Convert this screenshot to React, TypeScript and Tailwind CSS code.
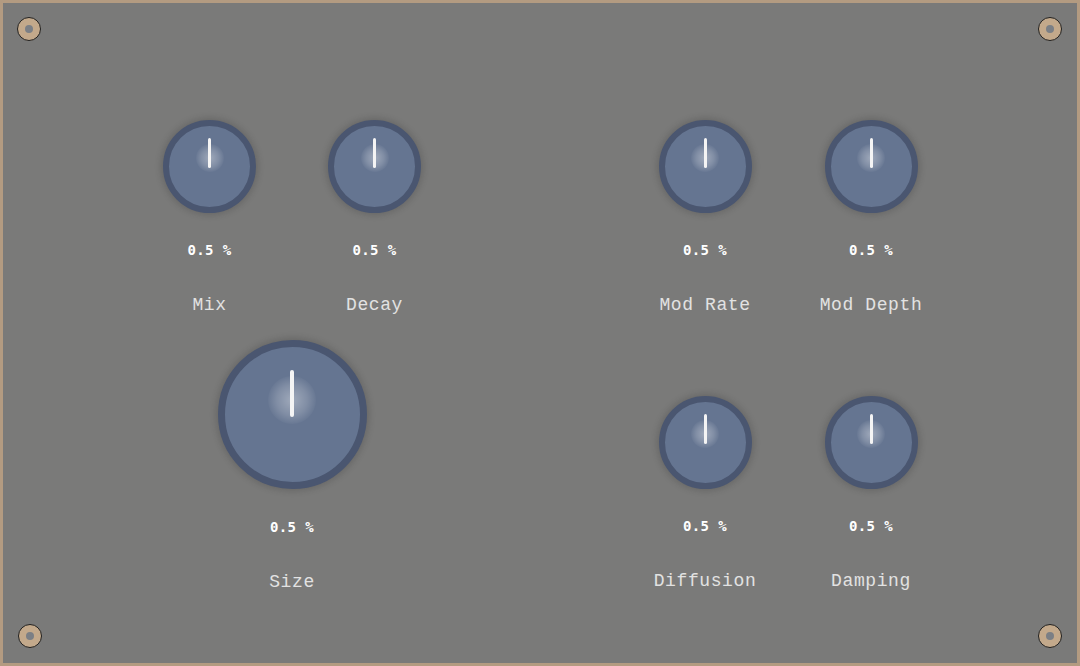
import React from "react";

type KnobProps = { size: number; ring: number; lineTop: number; lineLen: number; lineW: number; glowY: number; glowR: number };

function Knob({ size, ring, lineTop, lineLen, lineW, glowY, glowR }: KnobProps) {
  return (
    <div
      className="relative rounded-full bg-[#657591] border-[#4a5670] shadow-[0_0_6px_2px_rgba(40,40,40,0.22)]"
      style={{ width: size, height: size, borderWidth: ring }}
    >
      <div
        className="absolute rounded-full bg-[radial-gradient(circle,rgba(255,255,255,0.38)_0%,rgba(255,255,255,0.18)_45%,rgba(255,255,255,0)_75%)]"
        style={{ width: glowR * 2, height: glowR * 2, left: size / 2 - ring - glowR, top: glowY - ring - glowR }}
      />
      <div
        className="absolute rounded-full bg-[#f4f4f4]"
        style={{ width: lineW, height: lineLen, left: size / 2 - ring - lineW / 2, top: lineTop - ring }}
      />
    </div>
  );
}

function Cell({ label, big, width }: { label: string; big?: boolean; width: string }) {
  return (
    <div className={`flex flex-col items-center ${width}`}>
      {big ? (
        <Knob size={149} ring={7} lineTop={30} lineLen={47} lineW={4} glowY={60} glowR={24} />
      ) : (
        <Knob size={93} ring={6} lineTop={18} lineLen={30} lineW={3} glowY={38} glowR={14} />
      )}
      <div className={`${big ? "mt-[28px]" : "mt-[27px]"} h-[20px] leading-[20px] text-[14px] font-bold text-white font-['DejaVu_Sans_Mono',monospace] tracking-[0.4px]`}>
        0.5 %
      </div>
      <div className="mt-[35px] h-[20px] leading-[20px] text-[18px] text-[#e2e2e2] font-['Courier_New','Courier','Nimbus_Mono_PS','FreeMono','Liberation_Mono',monospace] tracking-[0.6px]">
        {label}
      </div>
    </div>
  );
}

function Screw({ pos }: { pos: string }) {
  return (
    <div className={`absolute ${pos} w-[24px] h-[24px] rounded-full bg-[#c3a98b] border-[1.5px] border-[#202020] flex items-center justify-center`}>
      <div className="w-[8px] h-[8px] rounded-full bg-[#7b7f85]" />
    </div>
  );
}

export default function App() {
  return (
    <div className="relative w-[1080px] h-[666px] bg-[#7a7a79] border-[3px] border-[#b39b81] overflow-hidden">
      <Screw pos="left-[14px] top-[14px]" />
      <Screw pos="right-[15px] top-[14px]" />
      <Screw pos="left-[15px] bottom-[15px]" />
      <Screw pos="right-[15px] bottom-[15px]" />
      <div className="flex pl-[124px] pt-[117px] gap-[165px]">
        <div className="flex flex-col">
          <div className="flex">
            <Cell label="Mix" width="w-[165px]" />
            <Cell label="Decay" width="w-[165px]" />
          </div>
          <div className="mt-[25px] flex">
            <Cell label="Size" big width="w-[330px]" />
          </div>
        </div>
        <div className="flex flex-col">
          <div className="flex">
            <Cell label="Mod Rate" width="w-[166px]" />
            <Cell label="Mod Depth" width="w-[166px]" />
          </div>
          <div className="mt-[81px] flex">
            <Cell label="Diffusion" width="w-[166px]" />
            <Cell label="Damping" width="w-[166px]" />
          </div>
        </div>
      </div>
    </div>
  );
}
